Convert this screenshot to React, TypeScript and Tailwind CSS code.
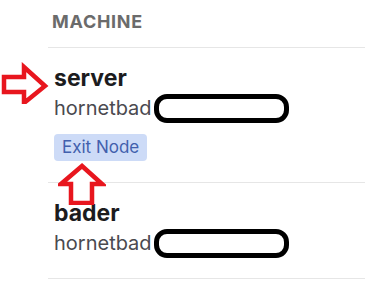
import React from 'react';

const machines = [
  { name: 'server', host: 'hornetbad', exitNode: true },
  { name: 'bader', host: 'hornetbad', exitNode: false },
];

// hand-drawn red arrows from the annotated screenshot
function RightArrow() {
  return (
    <svg width="48" height="42" viewBox="0 0 48 42" className="absolute left-[1px] top-[62px]">
      <path
        d="M3 15 H23 V5 L44 24 L23 41 V30 H3 Z"
        fill="white"
        stroke="#e8161e"
        strokeWidth="4.5"
        strokeLinejoin="miter"
      />
    </svg>
  );
}

function UpArrow() {
  return (
    <svg width="48" height="42" viewBox="0 0 48 42" className="absolute left-[58px] top-[163px]">
      <path
        d="M24 3 L44 21 H34 V40 H13 V21 H3 Z"
        fill="white"
        stroke="#e8161e"
        strokeWidth="4.5"
        strokeLinejoin="miter"
      />
    </svg>
  );
}

export default function App() {
  return (
    <div className="relative w-[365px] h-[284px] overflow-hidden bg-white font-['Inter','Liberation_Sans',sans-serif]">
      <div className="ml-[48px]">
        {/* Header */}
        <div className="pl-[4px] pt-[10px] pb-[13px] border-b border-[#e6e6e6]">
          <span className="text-[18px] leading-[24px] font-bold tracking-[0.04em] text-[#6b6b6b]">MACHINE</span>
        </div>

        {/* Rows */}
        {machines.map((m) => (
          <div key={m.name} className="pl-[6px] pt-[16px] pb-[21px] border-b border-[#e6e6e6]">
            <div className="text-[23px] leading-[28px] font-bold text-[#1c1c1e]">{m.name}</div>
            <div className="mt-[2px] flex items-center h-[28px]">
              <span className="text-[20px] leading-[28px] text-[#4a4a4f]">{m.host}</span>
              <span className="ml-[2px] inline-block w-[135px] h-[29px] border-[5px] border-black rounded-[13px]" />
            </div>
            {m.exitNode && (
              <div className="mt-[12px] inline-flex items-center h-[27px] px-[8px] rounded-[4px] bg-[#cddbf7] text-[17px] text-[#4260ad]">
                Exit Node
              </div>
            )}
          </div>
        ))}
      </div>

      <RightArrow />
      <UpArrow />
    </div>
  );
}
